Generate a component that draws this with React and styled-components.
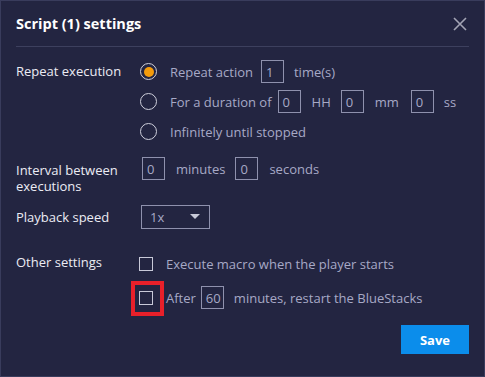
import styled, { createGlobalStyle } from 'styled-components';

const GlobalStyle = createGlobalStyle`
    html, body {
        margin: 0;
        padding: 0;
        background: #232541;
    }
    * {
        box-sizing: border-box;
    }
`

const Modal = styled.div`
    width: 485px;
    height: 377px;
    background: #232541;
    border: 1px solid #393c5c;
    font-family: "Open Sans", "Noto Sans", sans-serif;
    font-size: 13px;
    color: #e6e6f0;
    display: flex;
    flex-direction: column;
`

const Header = styled.div`
    margin: 0 15px;
    height: 46px;
    border-bottom: 1px solid #3d405e;
    display: flex;
    align-items: center;
    justify-content: space-between;
`

const Title = styled.h1`
    margin: 0;
    font-size: 14.5px;
    font-weight: 700;
    color: #ffffff;
`

const Close = styled.button`
    background: none;
    border: none;
    padding: 0;
    width: 16px;
    height: 16px;
    margin-right: 1px;
    display: flex;
    cursor: pointer;
`

const Body = styled.div`
    padding: 13px 15px 0;
    display: flex;
    flex-direction: column;
    flex: 1;
`

const Section = styled.div`
    display: grid;
    grid-template-columns: 124px 1fr;
    margin-bottom: ${p => p.$gap || 0}px;
`

const Label = styled.div`
    line-height: 16px;
    padding-top: ${p => p.$top ?? 3}px;
    color: #ececf4;
`

const Options = styled.div`
    display: flex;
    flex-direction: column;
    gap: ${p => p.$gap || 7}px;
`

const Row = styled.div`
    display: flex;
    align-items: center;
    height: 23px;
    color: #a7a9c6;
    white-space: nowrap;
`

const Radio = styled.span`
    width: 17px;
    height: 17px;
    border-radius: 50%;
    border: 1.5px solid #cfd0dc;
    margin: 0 13px 0 0;
    display: flex;
    align-items: center;
    justify-content: center;
    flex-shrink: 0;
    &::after {
        content: '';
        width: 10px;
        height: 10px;
        border-radius: 50%;
        background: ${p => (p.$checked ? '#f59c0b' : 'transparent')};
    }
`

const Box = styled.span`
    width: 23px;
    height: 23px;
    border: 1px solid #8f91ad;
    display: inline-flex;
    align-items: center;
    padding-left: 4px;
    color: #a7a9c6;
    margin: 0 ${p => p.$right ?? 11}px 0 ${p => p.$left ?? 1}px;
    flex-shrink: 0;
`

const Select = styled.div`
    width: 69px;
    height: 24px;
    margin-left: 1px;
    border: 1px solid #8f91ad;
    display: flex;
    align-items: center;
    justify-content: space-between;
    padding: 0 9px 0 8px;
    color: #a7a9c6;
`

const Caret = styled.span`
    width: 0;
    height: 0;
    border-left: 5px solid transparent;
    border-right: 5px solid transparent;
    border-top: 5px solid #c8c9d8;
    margin-top: -2px;
`

const Check = styled.span`
    position: relative;
    width: 14px;
    height: 14px;
    border: 1.5px solid #c8c9d8;
    margin: 0 13px 0 -1px;
    flex-shrink: 0;
    ${p => p.$marked && `
        &::after {
            content: '';
            position: absolute;
            left: -9.5px;
            right: -11.5px;
            top: -10.5px;
            bottom: -12.5px;
            border: 4px solid #e8202a;
        }
    `}
`

const Footer = styled.div`
    display: flex;
    justify-content: flex-end;
    margin-top: 16px;
`

const SaveButton = styled.button`
    width: 68px;
    height: 29px;
    border: none;
    background: #0b8deb;
    color: #ffffff;
    font-family: "Open Sans", "Noto Sans", sans-serif;
    font-size: 13px;
    font-weight: 700;
    cursor: pointer;
`

const App = () => {
    return (
        <>
            <GlobalStyle />
            <Modal>
                <Header>
                    <Title>Script (1) settings</Title>
                    <Close aria-label="Close">
                        <svg width="16" height="16" viewBox="0 0 16 16">
                            <path d="M2 2 L14 14 M14 2 L2 14" stroke="#a3a4b4" strokeWidth="1.6" />
                        </svg>
                    </Close>
                </Header>
                <Body>
                    <Section $gap={14}>
                        <Label>Repeat execution</Label>
                        <Options>
                            <Row>
                                <Radio $checked />
                                Repeat action
                                <Box $left={8} $right={10}>1</Box>
                                time(s)
                            </Row>
                            <Row>
                                <Radio />
                                For a duration of
                                <Box $left={6}>0</Box>
                                HH
                                <Box $left={10}>0</Box>
                                mm
                                <Box $left={12} $right={10}>0</Box>
                                ss
                            </Row>
                            <Row>
                                <Radio />
                                Infinitely until stopped
                            </Row>
                        </Options>
                    </Section>
                    <Section $gap={11}>
                        <Label $top={5}>Interval between<br />executions</Label>
                        <Options>
                            <Row>
                                <Box $left={2}>0</Box>
                                minutes
                                <Box $left={10}>0</Box>
                                seconds
                            </Row>
                        </Options>
                    </Section>
                    <Section $gap={23}>
                        <Label $top={4}>Playback speed</Label>
                        <Options>
                            <Select>
                                1x
                                <Caret />
                            </Select>
                        </Options>
                    </Section>
                    <Section>
                        <Label $top={2}>Other settings</Label>
                        <Options $gap={11}>
                            <Row>
                                <Check />
                                Execute macro when the player starts
                            </Row>
                            <Row>
                                <Check $marked />
                                After
                                <Box $left={5} $right={10}>60</Box>
                                minutes, restart the BlueStacks
                            </Row>
                        </Options>
                    </Section>
                    <Footer>
                        <SaveButton>Save</SaveButton>
                    </Footer>
                </Body>
            </Modal>
        </>
    )
}

export default App
